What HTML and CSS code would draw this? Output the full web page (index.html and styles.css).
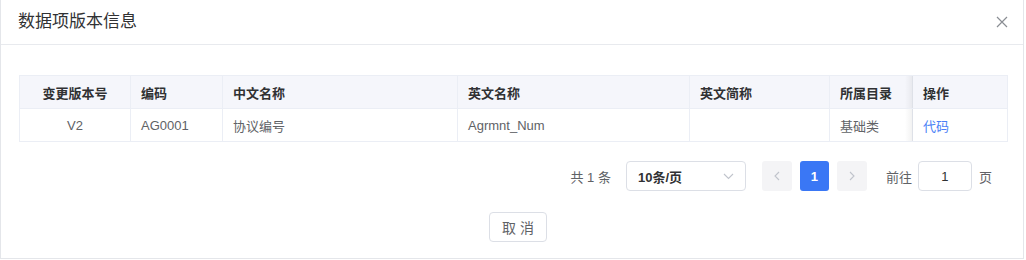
FILE: index.html
```html
<!DOCTYPE html>
<html lang="zh-CN">
<head>
<meta charset="utf-8">
<title>数据项版本信息</title>
<link rel="stylesheet" href="styles.css">
</head>
<body>
<div class="dialog">
  <div class="dialog-header">
    <span class="dialog-title">数据项版本信息</span>
    <button class="close" aria-label="关闭">
      <svg width="12" height="12" viewBox="0 0 12 12"><path d="M1 1L11 11M11 1L1 11" stroke="#8a8d93" stroke-width="1.2" fill="none"/></svg>
    </button>
  </div>
  <div class="dialog-body">
    <table class="grid">
      <colgroup>
        <col style="width:111px"><col style="width:92px"><col style="width:235px"><col style="width:232px"><col style="width:140px"><col style="width:83px"><col style="width:95px">
      </colgroup>
      <thead>
        <tr>
          <th class="center">变更版本号</th>
          <th>编码</th>
          <th>中文名称</th>
          <th>英文名称</th>
          <th>英文简称</th>
          <th>所属目录</th>
          <th class="fixed">操作</th>
        </tr>
      </thead>
      <tbody>
        <tr>
          <td class="center">V2</td>
          <td>AG0001</td>
          <td>协议编号</td>
          <td>Agrmnt_Num</td>
          <td></td>
          <td>基础类</td>
          <td class="fixed"><a class="link" href="#">代码</a></td>
        </tr>
      </tbody>
    </table>
    <div class="pager">
      <span class="total">共 1 条</span>
      <div class="select">
        <span>10条/页</span>
        <svg width="11" height="7" viewBox="0 0 11 7"><path d="M1 1L5.5 5.5L10 1" stroke="#c0c4cc" stroke-width="1.1" fill="none"/></svg>
      </div>
      <button class="pg-btn disabled" aria-label="上一页">
        <svg width="6" height="10" viewBox="0 0 6 10"><path d="M5 1L1 5L5 9" stroke="#c0c4cc" stroke-width="1.1" fill="none"/></svg>
      </button>
      <button class="pg-num active">1</button>
      <button class="pg-btn disabled" aria-label="下一页">
        <svg width="6" height="10" viewBox="0 0 6 10"><path d="M1 1L5 5L1 9" stroke="#c0c4cc" stroke-width="1.1" fill="none"/></svg>
      </button>
      <span class="jump">前往</span>
      <div class="jump-input">1</div>
      <span class="jump-unit">页</span>
    </div>
  </div>
  <div class="dialog-footer">
    <button class="btn">取 消</button>
  </div>
</div>
</body>
</html>
```
FILE: styles.css
```css
* { box-sizing: border-box; }
html, body { margin: 0; padding: 0; background: #fff; }
body {
  font-family: "Liberation Sans", "Noto Sans CJK SC", sans-serif;
  color: #606266;
  width: 1026px;
  height: 260px;
  overflow: hidden;
}
.dialog {
  width: 1024px;
  height: 259px;
  border-left: 1px solid #e4e6ea;
  border-right: 1px solid #e4e6ea;
  border-bottom: 1px solid #e4e6ea;
  background: #fff;
}
.dialog-header {
  height: 45px;
  border-bottom: 1px solid #e8eaee;
  display: flex;
  align-items: center;
  justify-content: space-between;
  padding: 0 14px 1px 17px;
}
.dialog-title {
  font-size: 17px;
  color: #303133;
  line-height: 24px;
}
.close {
  border: 0;
  background: none;
  padding: 0;
  width: 14px;
  height: 14px;
  display: flex;
  align-items: center;
  justify-content: center;
  cursor: pointer;
}
.dialog-body {
  padding: 30px 18px 0 18px;
}
.grid {
  width: 988px;
  table-layout: fixed;
  border-collapse: collapse;
  border: 1px solid #ebeef5;
  font-size: 13px;
}
.grid th, .grid td {
  height: 33px;
  padding: 0 10px;
  text-align: left;
  border: 1px solid #ebeef5;
  white-space: nowrap;
}
.grid th {
  background: #f5f6fb;
  color: #303133;
  font-weight: bold;
}
.grid td { color: #606266; }
.grid .center { text-align: center; }
.grid .fixed {
  position: relative;
  border-left: 0;
}
.grid .fixed::before {
  content: "";
  position: absolute;
  left: -8px;
  top: 0;
  bottom: 0;
  width: 8px;
  background: linear-gradient(to right, rgba(0,0,0,0), rgba(0,0,0,0.06));
}
.link { color: #4a7ff6; text-decoration: none; }
.pager {
  margin-top: 19px;
  height: 30px;
  display: flex;
  align-items: center;
  justify-content: flex-end;
  padding-right: 13px;
  font-size: 13px;
  color: #606266;
}
.total { margin-right: 15px; }
.select {
  width: 120px;
  height: 30px;
  border: 1px solid #dcdfe6;
  border-radius: 4px;
  display: flex;
  align-items: center;
  justify-content: space-between;
  padding: 0 11px 0 11px;
  margin-right: 16px;
  font-weight: bold;
  color: #303133;
}
.pg-btn, .pg-num {
  width: 30px;
  height: 30px;
  border: 0;
  border-radius: 3px;
  background: #f4f4f6;
  display: flex;
  align-items: center;
  justify-content: center;
  padding: 0;
  font-family: inherit;
  font-size: 13px;
  font-weight: bold;
}
.pg-num { margin: 0 8px; width: 29px; }
.pg-num.active { background: #3a77f5; color: #fff; }
.jump { margin-left: 19px; margin-right: 6px; }
.jump-input {
  width: 54px;
  height: 30px;
  border: 1px solid #dcdfe6;
  border-radius: 4px;
  display: flex;
  align-items: center;
  justify-content: center;
  color: #303133;
}
.jump-unit { margin-left: 7px; }
.dialog-footer {
  display: flex;
  justify-content: center;
  padding-top: 21px;
  padding-left: 12px;
}
.btn {
  width: 58px;
  height: 30px;
  border: 1px solid #dcdfe6;
  border-radius: 4px;
  background: #fff;
  font-family: inherit;
  font-size: 14px;
  color: #606266;
  padding: 0;
}
```
